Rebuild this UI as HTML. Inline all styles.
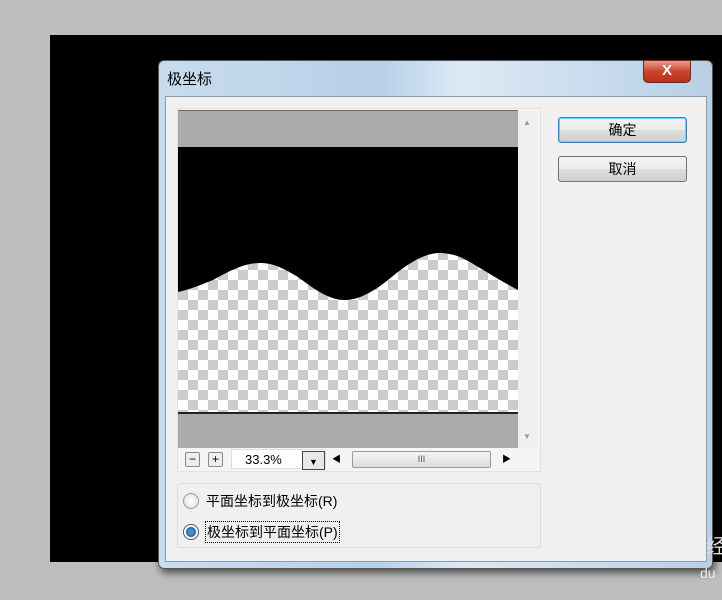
<!DOCTYPE html><html><head><meta charset="utf-8"><style>
body{margin:0;width:722px;height:600px;background:#bebebe;position:relative;overflow:hidden;font-family:"Liberation Sans","Noto Sans CJK SC",sans-serif}
.a{position:absolute}
.btn{position:absolute;left:558px;width:127px;height:24px;border:1px solid #707070;border-radius:3px;background:linear-gradient(#f2f2f2,#ebebeb 50%,#dddddd 51%,#cfcfcf);font-size:14px;text-align:center;line-height:24px;color:#000}
</style></head><body>
<div class="a" style="left:50px;top:35px;width:672px;height:527px;background:#000"></div>
<div class="a" style="left:158px;top:60px;width:553px;height:507px;border-radius:6px;background:linear-gradient(90deg,#c9dcee,#b7d0e8 40%,#dce9f5 55%,#b8cfe6);box-shadow:2px 4px 8px rgba(0,0,0,.6);border:1px solid #555"></div>
<div class="a" style="left:167px;top:68px;font-size:15px;color:#000">极坐标</div>
<div class="a" style="left:643px;top:60px;width:46px;height:21px;border-radius:0 0 5px 5px;background:linear-gradient(#e8a08e,#c7452e 50%,#b9301c);border:1px solid #6b2a20;color:#fff;font-weight:bold;font-size:15px;text-align:center;line-height:20px">X</div>
<div class="a" style="left:165px;top:96px;width:540px;height:464px;background:#f0f0f0;border:1px solid #8a9bb0"></div>
<div class="btn" style="top:117px;border-color:#3c7fb1;box-shadow:inset 0 0 0 1px #6fd0f5">确定</div>
<div class="btn" style="top:156px">取消</div>
<div class="a" style="left:177px;top:108px;width:362px;height:362px;background:#f5f5f5;border:1px solid #e2e2e2"></div>
<svg class="a" style="left:178px;top:110px" width="340" height="338">
<defs><pattern id="c" width="20" height="20" patternUnits="userSpaceOnUse" x="0" y="0"><rect width="20" height="20" fill="#fff"/><rect width="10" height="10" fill="#cbcbcb"/><rect x="10" y="10" width="10" height="10" fill="#cbcbcb"/></pattern></defs>
<rect width="340" height="338" fill="#ababab"/>
<rect y="37" width="340" height="266" fill="url(#c)"/>
<path d="M0 37H340V180C325 172 305 160 292 152C280 145 270 143 262 143C245 143 228 155 210 170C195 182 180 190 167 190C150 190 135 178 120 167C105 158 95 153 82 153C65 153 50 162 35 170C20 176 10 180 0 182Z" fill="#000"/>
<rect y="302" width="340" height="2" fill="#222"/>
<rect x="0" y="0" width="340" height="1" fill="#666"/>
</svg>
<div class="a" style="left:518px;top:110px;width:20px;height:338px;background:#f0f0f0"></div>
<div class="a" style="left:523px;top:118px;font-size:8px;color:#999">▲</div>
<div class="a" style="left:523px;top:432px;font-size:8px;color:#999">▼</div>
<div class="a" style="left:185px;top:452px;width:13px;height:13px;border:1px solid #888;border-radius:2px;background:#eee;font-size:12px;line-height:12px;text-align:center">−</div>
<div class="a" style="left:208px;top:452px;width:13px;height:13px;border:1px solid #888;border-radius:2px;background:#eee;font-size:12px;line-height:12px;text-align:center">+</div>
<div class="a" style="left:231px;top:449px;width:95px;height:20px;background:#fff;border:1px solid #ddd;font-size:13px;line-height:20px;padding-left:13px;box-sizing:border-box">33.3%</div>
<div class="a" style="left:302px;top:451px;width:21px;height:17px;border:1px solid #444;background:#e8e8e8;font-size:9px;text-align:center;line-height:20px">▼</div>
<div class="a" style="left:332px;top:452px;font-size:9px">◀</div>
<div class="a" style="left:352px;top:451px;width:137px;height:15px;border:1px solid #999;border-radius:2px;background:linear-gradient(#f4f4f4,#dcdcdc);font-size:9px;text-align:center;line-height:15px;color:#555">III</div>
<div class="a" style="left:502px;top:452px;font-size:9px">▶</div>
<div class="a" style="left:177px;top:483px;width:362px;height:63px;border:1px solid #dcdcdc;border-radius:3px"></div>
<div class="a" style="left:183px;top:493px;width:14px;height:14px;border-radius:50%;border:1px solid #999;background:radial-gradient(#fff,#ddd)"></div>
<div class="a" style="left:206px;top:491px;font-size:14px">平面坐标到极坐标(R)</div>
<div class="a" style="left:183px;top:524px;width:14px;height:14px;border-radius:50%;border:1px solid #556;background:radial-gradient(#3a8fd8 30%,#1e4f8a 45%,#fff 55%)"></div>
<div class="a" style="left:205px;top:521px;font-size:14px;border:1px dotted #000;padding:0 1px">极坐标到平面坐标(P)</div>
<div class="a" style="left:706px;top:530px;font-size:20px;color:#ddd">经</div>
<div class="a" style="left:700px;top:565px;font-size:14px;color:#eee">du</div>
</body></html>
